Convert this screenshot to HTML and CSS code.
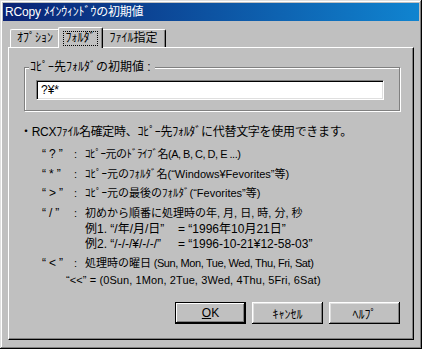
FILE: index.html
```html
<!DOCTYPE html>
<html lang="ja">
<head>
    <meta charset="UTF-8">
    <title>RCopy メインウィンドウの初期値</title>
    <link rel="stylesheet" href="styles.css">
</head>
<body>
    <div class="window">
        <div class="titlebar">RCopy ﾒｲﾝｳｨﾝﾄﾞｳの初期値</div>
        <div class="tabs">
            <div class="tab tab-opt">ｵﾌﾟｼｮﾝ</div>
            <div class="tab tab-folder active"><span class="focus">ﾌｫﾙﾀﾞ</span></div>
            <div class="tab tab-file">ﾌｧｲﾙ指定</div>
        </div>
        <div class="panel">
            <fieldset class="group">
                <legend>ｺﾋﾟｰ先ﾌｫﾙﾀﾞの初期値 :</legend>
                <div class="field">?¥*</div>
            </fieldset>
            <div class="notes">
                <div class="lead">・RCXﾌｧｲﾙ名確定時、ｺﾋﾟｰ先ﾌｫﾙﾀﾞに代替文字を使用できます。</div>
                <div class="row r2"><span class="key">“?”</span><span class="colon">:</span><span class="tight">ｺﾋﾟｰ元のﾄﾞﾗｲﾌﾞ名(A, B, C, D, E ...)</span></div>
                <div class="row r3"><span class="key">“*”</span><span class="colon">:</span><span>ｺﾋﾟｰ元のﾌｫﾙﾀﾞ名(“Windows¥Fevorites”等)</span></div>
                <div class="row r4"><span class="key">“&gt;”</span><span class="colon">:</span><span>ｺﾋﾟｰ元の最後のﾌｫﾙﾀﾞ(“Fevorites”等)</span></div>
                <div class="row r5"><span class="key">“/”</span><span class="colon">:</span><span>初めから順番に処理時の年, 月, 日, 時, 分, 秒</span></div>
                <div class="row ex ex1"><span class="ex-name">例1. “/年/月/日”</span><span>= “1996年10月21日”</span></div>
                <div class="row ex ex2"><span class="ex-name">例2. “/-/-/¥/-/-/”</span><span>= “1996-10-21¥12-58-03”</span></div>
                <div class="row r6"><span class="key">“&lt;”</span><span class="colon">:</span><span>処理時の曜日<span class="days"> (Sun, Mon, Tue, Wed, Thu, Fri, Sat)</span></span></div>
                <div class="row r7">“&lt;&lt;” = (0Sun, 1Mon, 2Tue, 3Wed, 4Thu, 5Fri, 6Sat)</div>
            </div>
            <div class="buttons">
                <button class="btn default"><u>O</u>K</button>
                <button class="btn">ｷｬﾝｾﾙ</button>
                <button class="btn">ﾍﾙﾌﾟ</button>
            </div>
        </div>
    </div>
</body>
</html>
```

FILE: styles.css
```css
body {
    margin: 0;
    padding: 0;
    background: #c0c0c0;
    font-family: "Liberation Sans", "Noto Sans CJK JP", sans-serif;
    font-size: 12px;
    color: #000;
}
.window {
    width: 422px;
    height: 349px;
    box-sizing: border-box;
    padding: 3px;
    background: #c0c0c0;
    box-shadow: inset -1px -1px #000, inset 1px 1px #dfdfdf, inset -2px -2px #808080, inset 2px 2px #fff;
}
.titlebar {
    height: 18px;
    line-height: 18px;
    padding-left: 2px;
    color: #fff;
    background: linear-gradient(to right, #0a2274, #1084d0);
    white-space: nowrap;
    letter-spacing: -0.2px;
}
.tabs {
    display: flex;
    align-items: flex-start;
    height: 20px;
    margin: 6px 0 0 7px;
}
.tab {
    box-sizing: border-box;
    height: 18px;
    margin-top: 2px;
    line-height: 16px;
    text-align: center;
    border-top: 1px solid #fff;
    border-left: 1px solid #fff;
    border-right: 1px solid #000;
    border-radius: 2px 2px 0 0;
    box-shadow: inset -1px 0 #808080;
    background: #c0c0c0;
}
.tab-opt { width: 50px; }
.tab-folder { width: 41px; }
.tab-file { width: 65px; }
.tab.active {
    position: relative;
    z-index: 1;
    width: 45px;
    height: 21px;
    margin: 0 -2px -1px -2px;
    padding-top: 2px;
}
.focus {
    display: inline-block;
    line-height: 13px;
    padding: 0 1px;
    outline: 1px dotted #000;
}
.panel {
    box-sizing: border-box;
    width: 406px;
    height: 293px;
    margin-left: 5px;
    border-top: 1px solid #fff;
    border-left: 1px solid #fff;
    border-right: 1px solid #000;
    border-bottom: 1px solid #000;
    box-shadow: inset -1px -1px #808080;
}
.group {
    box-sizing: border-box;
    width: 376px;
    height: 50px;
    margin: 13px 0 0 15px;
    padding: 6px 15px 0 11px;
    border: 1px solid #808080;
    box-shadow: inset 1px 1px #fff, 1px 1px #fff;
}
.group legend {
    margin-left: -7px;
    padding: 0 4px 0 1px;
    line-height: 13px;
    background: #c0c0c0;
}
.field {
    height: 20px;
    box-sizing: border-box;
    padding: 1px 4px;
    line-height: 16px;
    background: #fff;
    border-top: 1px solid #808080;
    border-left: 1px solid #808080;
    border-right: 1px solid #fff;
    border-bottom: 1px solid #fff;
    box-shadow: inset 1px 1px #000, inset -1px -1px #dfdfdf;
}
.notes {
    margin: 14px 0 0 11px;
}
.lead, .row {
    height: 15px;
    line-height: 15px;
    white-space: nowrap;
}
.lead { letter-spacing: -0.3px; }
.row {
    display: flex;
    padding-left: 22px;
    font-size: 11px;
}
.key {
    width: 32px;
    font-size: 12px;
    letter-spacing: 3px;
}
.colon { width: 11px; }
.tight { letter-spacing: -0.5px; }
.days { letter-spacing: -0.4px; }
.r2 { margin-top: 7px; }
.r3 { margin-top: 5px; }
.r4 { margin-top: 4px; }
.r5 { margin-top: 5px; }
.ex {
    padding-left: 65px;
    font-size: 12px;
}
.ex1 { margin-top: 1px; }
.ex-name {
    flex-shrink: 0;
    width: 93px;
}
.r6 { margin-top: 4px; }
.r7 {
    margin-top: 2px;
    padding-left: 46px;
    letter-spacing: 0.1px;
}
.buttons {
    display: flex;
    justify-content: flex-end;
    gap: 6px;
    margin: 14px 13px 0 0;
}
.btn {
    width: 71px;
    height: 22px;
    padding: 0;
    font: inherit;
    color: #000;
    background: #c0c0c0;
    border: none;
    box-shadow: inset -1px -1px #000, inset 1px 1px #fff, inset -2px -2px #808080, inset 2px 2px #dfdfdf;
}
.btn.default {
    box-shadow: inset 0 0 0 1px #000, inset -2px -2px #000, inset 2px 2px #fff, inset -3px -3px #808080;
}
```
